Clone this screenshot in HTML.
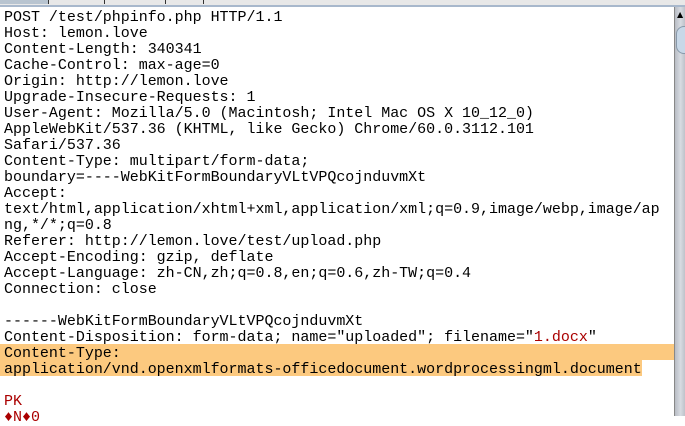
<!DOCTYPE html>
<html><head><meta charset="utf-8"><style>
html,body{margin:0;padding:0;width:685px;height:416px;overflow:hidden;background:#fff}
.top{position:absolute;left:0;top:0;width:685px;height:5px;background:#e8e8e8}
.tab{position:absolute;top:0;height:4px;border-right:1px solid #333;}
.line{position:absolute;left:0;top:5px;width:685px;height:2px;background:#a8b8cc}
.sb{position:absolute;left:674px;top:7px;width:11px;height:409px;background:linear-gradient(90deg,#b8bcc4,#d8dce2 50%,#b8bcc4);border-left:1px solid #888}
.thumb{position:absolute;left:676px;top:26px;width:9px;height:26px;background:#c8d8e8;border:1px solid #8899aa;border-radius:8px 0 0 8px}
.hl1{position:absolute;left:0;top:344px;width:674px;height:16px;background:#fcc97f}
.hl2{position:absolute;left:0;top:360px;width:642px;height:16px;background:#fcc97f}
pre{position:absolute;left:4px;top:10px;margin:0;font-family:"Liberation Mono",monospace;font-size:15px;line-height:16px;color:#000;letter-spacing:-0.02px}
.r{color:#a00}
</style></head><body>
<div class="top"></div>
<div class="tab" style="left:0;width:48px;background:#b8c4d0"></div>
<div class="tab" style="left:49px;width:55px"></div>
<div class="tab" style="left:105px;width:60px"></div>
<div class="tab" style="left:166px;width:37px"></div>
<div class="line"></div>
<div class="hl1"></div><div class="hl2"></div>
<div class="sb"></div><div class="thumb"></div>
<div style="position:absolute;left:677px;top:10px;font-size:8px;font-family:'DejaVu Sans',sans-serif">▲</div>
<pre>POST /test/phpinfo.php HTTP/1.1
Host: lemon.love
Content-Length: 340341
Cache-Control: max-age=0
Origin: http://lemon.love
Upgrade-Insecure-Requests: 1
User-Agent: Mozilla/5.0 (Macintosh; Intel Mac OS X 10_12_0)
AppleWebKit/537.36 (KHTML, like Gecko) Chrome/60.0.3112.101
Safari/537.36
Content-Type: multipart/form-data;
boundary=----WebKitFormBoundaryVLtVPQcojnduvmXt
Accept:
text/html,application/xhtml+xml,application/xml;q=0.9,image/webp,image/ap
ng,*/*;q=0.8
Referer: http://lemon.love/test/upload.php
Accept-Encoding: gzip, deflate
Accept-Language: zh-CN,zh;q=0.8,en;q=0.6,zh-TW;q=0.4
Connection: close

------WebKitFormBoundaryVLtVPQcojnduvmXt
Content-Disposition: form-data; name="uploaded"; filename="<span class="r">1.docx</span>"
Content-Type:
application/vnd.openxmlformats-officedocument.wordprocessingml.document

<span class="r">PK</span>
<span class="r">♦N♦0</span></pre>
</body></html>
